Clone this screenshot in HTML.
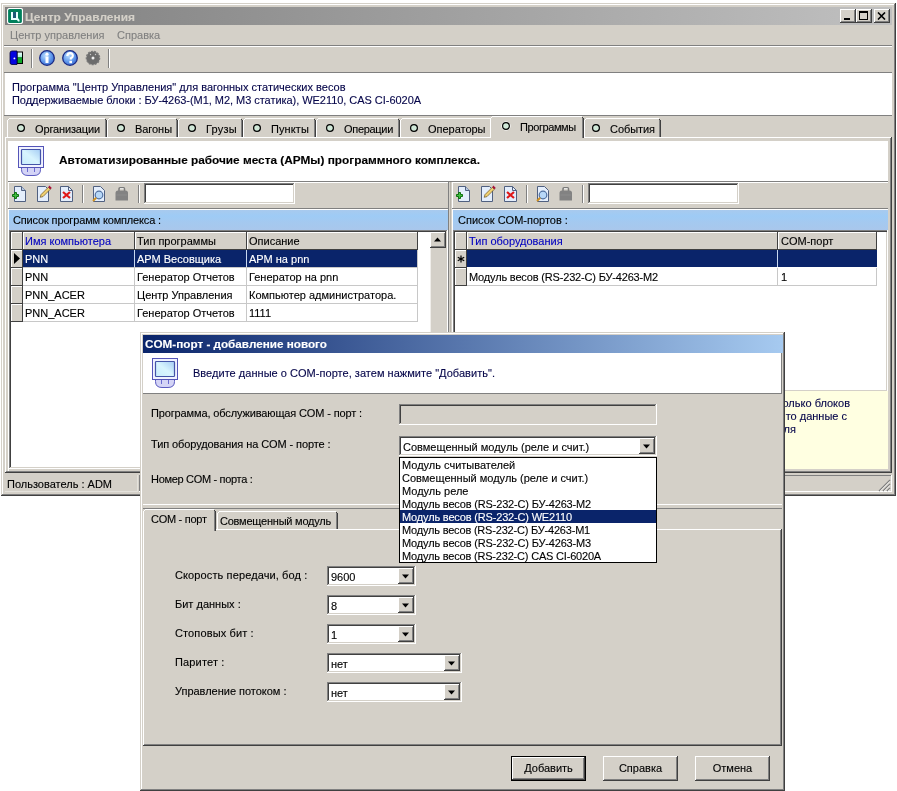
<!DOCTYPE html>
<html><head><meta charset="utf-8"><style>
html,body{margin:0;padding:0}
body{width:897px;height:791px;background:#fff;position:relative;overflow:hidden;font-family:"Liberation Sans",sans-serif;font-size:11px}
body>div{position:absolute}
.t{will-change:transform;-webkit-text-stroke:0.12px currentColor;white-space:pre;line-height:13px;font-family:"Liberation Sans",sans-serif;font-size:11px}
</style></head><body>
<div style="left:1px;top:3px;width:895px;height:493px;background:#d4d0c8;"></div>
<div style="left:1px;top:3px;width:894px;height:1px;background:#d4d0c8;"></div>
<div style="left:1px;top:3px;width:1px;height:492px;background:#d4d0c8;"></div>
<div style="left:1px;top:495px;width:895px;height:1px;background:#404040;"></div>
<div style="left:895px;top:3px;width:1px;height:493px;background:#404040;"></div>
<div style="left:2px;top:4px;width:892px;height:1px;background:#ffffff;"></div>
<div style="left:2px;top:4px;width:1px;height:490px;background:#ffffff;"></div>
<div style="left:2px;top:494px;width:893px;height:1px;background:#808080;"></div>
<div style="left:894px;top:4px;width:1px;height:491px;background:#808080;"></div>
<div style="left:5px;top:7px;width:887px;height:18px;background:linear-gradient(to right,#808080,#c0c0c0);"></div>
<svg style="position:absolute;left:7px;top:8px" width="16" height="16" viewBox="0 0 16 16">
<rect x="0.5" y="0.5" width="15" height="15" rx="2" fill="#00805c" stroke="#ffffff" stroke-width="1.2"/>
<rect x="5.5" y="4" width="4" height="6.5" fill="#1c5878"/>
<path d="M4 4 H6 V10 H9 V4 H11 V10 L12.5 12 V13.5 H11 L10 12 H4 Z" fill="#e8ffff"/>
</svg>
<div class="t" style="left:25px;top:11px;color:#d4d0c8;font-size:11px;font-weight:bold;transform:scaleX(1.0847);transform-origin:0 0;">Центр Управления</div>
<div style="left:840px;top:9px;width:16px;height:14px;background:#d4d0c8;"></div>
<div style="left:840px;top:9px;width:15px;height:1px;background:#ffffff;"></div>
<div style="left:840px;top:9px;width:1px;height:13px;background:#ffffff;"></div>
<div style="left:840px;top:22px;width:16px;height:1px;background:#404040;"></div>
<div style="left:855px;top:9px;width:1px;height:14px;background:#404040;"></div>
<div style="left:841px;top:10px;width:13px;height:1px;background:#d4d0c8;"></div>
<div style="left:841px;top:10px;width:1px;height:11px;background:#d4d0c8;"></div>
<div style="left:841px;top:21px;width:14px;height:1px;background:#808080;"></div>
<div style="left:854px;top:10px;width:1px;height:12px;background:#808080;"></div>
<div style="left:844px;top:18px;width:6px;height:2px;background:#000;"></div>
<div style="left:856px;top:9px;width:16px;height:14px;background:#d4d0c8;"></div>
<div style="left:856px;top:9px;width:15px;height:1px;background:#ffffff;"></div>
<div style="left:856px;top:9px;width:1px;height:13px;background:#ffffff;"></div>
<div style="left:856px;top:22px;width:16px;height:1px;background:#404040;"></div>
<div style="left:871px;top:9px;width:1px;height:14px;background:#404040;"></div>
<div style="left:857px;top:10px;width:13px;height:1px;background:#d4d0c8;"></div>
<div style="left:857px;top:10px;width:1px;height:11px;background:#d4d0c8;"></div>
<div style="left:857px;top:21px;width:14px;height:1px;background:#808080;"></div>
<div style="left:870px;top:10px;width:1px;height:12px;background:#808080;"></div>
<div style="left:859px;top:11px;width:9px;height:9px;background:transparent;border:1px solid #000;border-top-width:2px;box-sizing:border-box"></div>
<div style="left:874px;top:9px;width:16px;height:14px;background:#d4d0c8;"></div>
<div style="left:874px;top:9px;width:15px;height:1px;background:#ffffff;"></div>
<div style="left:874px;top:9px;width:1px;height:13px;background:#ffffff;"></div>
<div style="left:874px;top:22px;width:16px;height:1px;background:#404040;"></div>
<div style="left:889px;top:9px;width:1px;height:14px;background:#404040;"></div>
<div style="left:875px;top:10px;width:13px;height:1px;background:#d4d0c8;"></div>
<div style="left:875px;top:10px;width:1px;height:11px;background:#d4d0c8;"></div>
<div style="left:875px;top:21px;width:14px;height:1px;background:#808080;"></div>
<div style="left:888px;top:10px;width:1px;height:12px;background:#808080;"></div>
<svg style="position:absolute;left:877px;top:12px" width="10" height="8" viewBox="0 0 10 8"><path d="M1 0.5 L8 7.5 M8 0.5 L1 7.5" stroke="#000" stroke-width="1.6"/></svg>
<div class="t" style="left:10px;top:29px;color:#808080;font-size:11px;">Центр управления</div>
<div class="t" style="left:117px;top:29px;color:#808080;font-size:11px;">Справка</div>
<div style="left:4px;top:45px;width:888px;height:1px;background:#808080;"></div>
<div style="left:4px;top:46px;width:888px;height:1px;background:#ffffff;"></div>
<svg style="position:absolute;left:9px;top:50px" width="16" height="16" viewBox="0 0 16 16">
<defs><linearGradient id="ex" x1="0" y1="0" x2="0" y2="1"><stop offset="0" stop-color="#f0ffff"/><stop offset="1" stop-color="#a0f0d8"/></linearGradient></defs>
<rect x="7.5" y="1.5" width="6.5" height="12.5" fill="#000"/>
<rect x="8.5" y="2.5" width="4.5" height="5" fill="url(#ex)"/>
<rect x="8.5" y="7.5" width="4.5" height="5.5" fill="#10a828"/>
<path d="M1 3 Q1 1 3 1 H8 V14.5 H3 Q1 14.5 1 12.5 Z" fill="#0404e0" stroke="#00003a" stroke-width="0.8"/>
<circle cx="5.4" cy="8.4" r="0.9" fill="#fff"/>
</svg>
<div style="left:31px;top:49px;width:1px;height:19px;background:#808080;"></div>
<div style="left:32px;top:49px;width:1px;height:19px;background:#ffffff;"></div>
<svg style="position:absolute;left:39px;top:50px" width="17" height="17" viewBox="0 0 17 17">
<defs><radialGradient id="bl" cx="0.4" cy="0.35" r="0.7"><stop offset="0" stop-color="#b8dcff"/><stop offset="0.6" stop-color="#6098ec"/><stop offset="1" stop-color="#3a68d0"/></radialGradient></defs>
<circle cx="8" cy="8" r="7.3" fill="url(#bl)" stroke="#1a2a84" stroke-width="1.3"/>
<rect x="6.5" y="6.5" width="3" height="6.5" fill="#fff"/><circle cx="8" cy="4.2" r="1.6" fill="#fff"/>
</svg>
<svg style="position:absolute;left:62px;top:50px" width="17" height="17" viewBox="0 0 17 17">
<circle cx="8" cy="8" r="7.3" fill="url(#bl)" stroke="#1a2a84" stroke-width="1.3"/>
<path d="M5.3 6 Q5.5 3.2 8.2 3.2 Q11 3.4 10.8 5.8 Q10.6 7.4 8.8 8.2 V9.6" fill="none" stroke="#fff" stroke-width="2.2"/>
<rect x="7.4" y="10.8" width="2.6" height="2.4" fill="#fff"/>
</svg>
<svg style="position:absolute;left:85px;top:50px" width="16" height="16" viewBox="0 0 16 16">
<circle cx="8" cy="8" r="6.6" fill="#6c6c6c" stroke="#7a7a7a" stroke-width="1.4" stroke-dasharray="2 1.2"/><circle cx="5.5" cy="4.5" r="0.7" fill="#c8c8c8"/><circle cx="10.5" cy="4.5" r="0.7" fill="#c8c8c8"/>
<circle cx="8" cy="8" r="1.5" fill="#f0f0f0"/>
</svg>
<div style="left:108px;top:49px;width:1px;height:19px;background:#808080;"></div>
<div style="left:109px;top:49px;width:1px;height:19px;background:#ffffff;"></div>
<div style="left:4px;top:72px;width:888px;height:1px;background:#808080;"></div>
<div style="left:5px;top:73px;width:887px;height:42px;background:#ffffff;"></div>
<div style="left:4px;top:115px;width:888px;height:1px;background:#808080;"></div>
<div class="t" style="left:12px;top:81px;color:#06064a;font-size:11px;letter-spacing:0.008px;">Программа "Центр Управления" для вагонных статических весов</div>
<div class="t" style="left:12px;top:94px;color:#06064a;font-size:11px;letter-spacing:-0.043px;">Поддерживаемые блоки : БУ-4263-(М1, М2, М3 статика), WE2110, CAS CI-6020A</div>
<div style="left:5px;top:137px;width:886px;height:1px;background:#ffffff;"></div>
<div style="left:5px;top:137px;width:1px;height:335px;background:#ffffff;"></div>
<div style="left:5px;top:472px;width:887px;height:1px;background:#404040;"></div>
<div style="left:891px;top:137px;width:1px;height:336px;background:#404040;"></div>
<div style="left:6px;top:471px;width:885px;height:1px;background:#808080;"></div>
<div style="left:890px;top:138px;width:1px;height:334px;background:#808080;"></div>
<div style="left:7px;top:118px;width:100px;height:19px;background:#d4d0c8;"></div>
<div style="left:9px;top:118px;width:96px;height:1px;background:#ffffff;"></div>
<div style="left:7px;top:120px;width:1px;height:17px;background:#ffffff;"></div>
<div style="left:8px;top:119px;width:1px;height:1px;background:#ffffff;"></div>
<div style="left:106px;top:120px;width:1px;height:17px;background:#404040;"></div>
<div style="left:105px;top:119px;width:1px;height:18px;background:#808080;"></div>
<div style="left:105px;top:119px;width:1px;height:1px;background:#404040;"></div>
<svg style="position:absolute;left:16px;top:123px" width="10" height="10" viewBox="0 0 10 10"><circle cx="5" cy="5" r="3.4" fill="#d0e8d8" stroke="#000" stroke-width="1.2"/></svg>
<div class="t" style="left:35px;top:123px;color:#000;font-size:11px;letter-spacing:-0.141px;">Организации</div>
<div style="left:107px;top:118px;width:71px;height:19px;background:#d4d0c8;"></div>
<div style="left:109px;top:118px;width:67px;height:1px;background:#ffffff;"></div>
<div style="left:107px;top:120px;width:1px;height:17px;background:#ffffff;"></div>
<div style="left:108px;top:119px;width:1px;height:1px;background:#ffffff;"></div>
<div style="left:177px;top:120px;width:1px;height:17px;background:#404040;"></div>
<div style="left:176px;top:119px;width:1px;height:18px;background:#808080;"></div>
<div style="left:176px;top:119px;width:1px;height:1px;background:#404040;"></div>
<svg style="position:absolute;left:116px;top:123px" width="10" height="10" viewBox="0 0 10 10"><circle cx="5" cy="5" r="3.4" fill="#d0e8d8" stroke="#000" stroke-width="1.2"/></svg>
<div class="t" style="left:135px;top:123px;color:#000;font-size:11px;letter-spacing:-0.055px;">Вагоны</div>
<div style="left:178px;top:118px;width:65px;height:19px;background:#d4d0c8;"></div>
<div style="left:180px;top:118px;width:61px;height:1px;background:#ffffff;"></div>
<div style="left:178px;top:120px;width:1px;height:17px;background:#ffffff;"></div>
<div style="left:179px;top:119px;width:1px;height:1px;background:#ffffff;"></div>
<div style="left:242px;top:120px;width:1px;height:17px;background:#404040;"></div>
<div style="left:241px;top:119px;width:1px;height:18px;background:#808080;"></div>
<div style="left:241px;top:119px;width:1px;height:1px;background:#404040;"></div>
<svg style="position:absolute;left:187px;top:123px" width="10" height="10" viewBox="0 0 10 10"><circle cx="5" cy="5" r="3.4" fill="#d0e8d8" stroke="#000" stroke-width="1.2"/></svg>
<div class="t" style="left:206px;top:123px;color:#000;font-size:11px;letter-spacing:0.241px;">Грузы</div>
<div style="left:243px;top:118px;width:73px;height:19px;background:#d4d0c8;"></div>
<div style="left:245px;top:118px;width:69px;height:1px;background:#ffffff;"></div>
<div style="left:243px;top:120px;width:1px;height:17px;background:#ffffff;"></div>
<div style="left:244px;top:119px;width:1px;height:1px;background:#ffffff;"></div>
<div style="left:315px;top:120px;width:1px;height:17px;background:#404040;"></div>
<div style="left:314px;top:119px;width:1px;height:18px;background:#808080;"></div>
<div style="left:314px;top:119px;width:1px;height:1px;background:#404040;"></div>
<svg style="position:absolute;left:252px;top:123px" width="10" height="10" viewBox="0 0 10 10"><circle cx="5" cy="5" r="3.4" fill="#d0e8d8" stroke="#000" stroke-width="1.2"/></svg>
<div class="t" style="left:271px;top:123px;color:#000;font-size:11px;letter-spacing:0.104px;">Пункты</div>
<div style="left:316px;top:118px;width:84px;height:19px;background:#d4d0c8;"></div>
<div style="left:318px;top:118px;width:80px;height:1px;background:#ffffff;"></div>
<div style="left:316px;top:120px;width:1px;height:17px;background:#ffffff;"></div>
<div style="left:317px;top:119px;width:1px;height:1px;background:#ffffff;"></div>
<div style="left:399px;top:120px;width:1px;height:17px;background:#404040;"></div>
<div style="left:398px;top:119px;width:1px;height:18px;background:#808080;"></div>
<div style="left:398px;top:119px;width:1px;height:1px;background:#404040;"></div>
<svg style="position:absolute;left:325px;top:123px" width="10" height="10" viewBox="0 0 10 10"><circle cx="5" cy="5" r="3.4" fill="#d0e8d8" stroke="#000" stroke-width="1.2"/></svg>
<div class="t" style="left:344px;top:123px;color:#000;font-size:11px;letter-spacing:-0.309px;">Операции</div>
<div style="left:400px;top:118px;width:92px;height:19px;background:#d4d0c8;"></div>
<div style="left:402px;top:118px;width:88px;height:1px;background:#ffffff;"></div>
<div style="left:400px;top:120px;width:1px;height:17px;background:#ffffff;"></div>
<div style="left:401px;top:119px;width:1px;height:1px;background:#ffffff;"></div>
<div style="left:491px;top:120px;width:1px;height:17px;background:#404040;"></div>
<div style="left:490px;top:119px;width:1px;height:18px;background:#808080;"></div>
<div style="left:490px;top:119px;width:1px;height:1px;background:#404040;"></div>
<svg style="position:absolute;left:409px;top:123px" width="10" height="10" viewBox="0 0 10 10"><circle cx="5" cy="5" r="3.4" fill="#d0e8d8" stroke="#000" stroke-width="1.2"/></svg>
<div class="t" style="left:428px;top:123px;color:#000;font-size:11px;letter-spacing:-0.021px;">Операторы</div>
<div style="left:584px;top:118px;width:77px;height:19px;background:#d4d0c8;"></div>
<div style="left:586px;top:118px;width:73px;height:1px;background:#ffffff;"></div>
<div style="left:584px;top:120px;width:1px;height:17px;background:#ffffff;"></div>
<div style="left:585px;top:119px;width:1px;height:1px;background:#ffffff;"></div>
<div style="left:660px;top:120px;width:1px;height:17px;background:#404040;"></div>
<div style="left:659px;top:119px;width:1px;height:18px;background:#808080;"></div>
<div style="left:659px;top:119px;width:1px;height:1px;background:#404040;"></div>
<svg style="position:absolute;left:591px;top:123px" width="10" height="10" viewBox="0 0 10 10"><circle cx="5" cy="5" r="3.4" fill="#d0e8d8" stroke="#000" stroke-width="1.2"/></svg>
<div class="t" style="left:610px;top:123px;color:#000;font-size:11px;letter-spacing:-0.060px;">События</div>
<div style="left:490px;top:116px;width:94px;height:23px;background:#d4d0c8;"></div>
<div style="left:492px;top:116px;width:90px;height:1px;background:#ffffff;"></div>
<div style="left:490px;top:118px;width:1px;height:20px;background:#ffffff;"></div>
<div style="left:491px;top:117px;width:1px;height:1px;background:#ffffff;"></div>
<div style="left:583px;top:118px;width:1px;height:20px;background:#404040;"></div>
<div style="left:582px;top:117px;width:1px;height:21px;background:#808080;"></div>
<div style="left:582px;top:117px;width:1px;height:1px;background:#404040;"></div>
<svg style="position:absolute;left:501px;top:121px" width="10" height="10" viewBox="0 0 10 10"><circle cx="5" cy="5" r="4.6" fill="#fff"/><circle cx="5" cy="5" r="3.4" fill="#d0e8d8" stroke="#000" stroke-width="1.2"/></svg>
<div class="t" style="left:520px;top:121px;color:#000;font-size:11px;letter-spacing:-0.414px;">Программы</div>
<div style="left:8px;top:141px;width:880px;height:40px;background:#ffffff;"></div>
<div style="left:8px;top:181px;width:880px;height:1px;background:#808080;"></div>
<svg style="position:absolute;left:18px;top:146px" width="27" height="31" viewBox="0 0 27 31">
<defs><linearGradient id="scr18" x1="0" y1="1" x2="1" y2="0"><stop offset="0" stop-color="#c8ecfc"/><stop offset="0.5" stop-color="#d8f4fe"/><stop offset="1" stop-color="#a4ccf4"/></linearGradient></defs>
<path d="M3.5 21 V23.5 Q3.5 29.5 10 29.5 H16 Q22.5 29.5 22.5 23.5 V21 Z" fill="#d4d4f6" stroke="#5a5ac0" stroke-width="1"/>
<rect x="0.5" y="0.5" width="25" height="21" fill="#f0f2ff" stroke="#5454b8" stroke-width="1"/>
<rect x="3.5" y="3.5" width="19" height="15" rx="0.8" fill="url(#scr18)" stroke="#4454a8" stroke-width="1.2"/>
<line x1="9.5" y1="22" x2="9.5" y2="26" stroke="#6a6ad0" stroke-width="1"/>
<line x1="16.5" y1="22" x2="16.5" y2="26" stroke="#6a6ad0" stroke-width="1"/>
</svg>
<div class="t" style="left:59px;top:154px;color:#000;font-size:11px;font-weight:bold;transform:scaleX(1.0740);transform-origin:0 0;">Автоматизированные рабочие места (АРМы) программного комплекса.</div>
<div style="left:8px;top:182px;width:440px;height:1px;background:#ffffff;"></div>
<div style="left:8px;top:182px;width:1px;height:289px;background:#ffffff;"></div>
<div style="left:448px;top:182px;width:1px;height:289px;background:#808080;"></div>
<div style="left:452px;top:182px;width:436px;height:1px;background:#ffffff;"></div>
<div style="left:452px;top:182px;width:1px;height:289px;background:#ffffff;"></div>
<div style="left:450px;top:182px;width:1px;height:289px;background:#b8b4ac;"></div>
<svg style="position:absolute;left:12px;top:185px" width="16" height="18" viewBox="0 0 16 18">
<path d="M2.5 1.5 H9.5 L13.5 5.5 V16.5 H2.5 Z" fill="#e4eefc" stroke="#506080" stroke-width="1"/>
<path d="M9.5 1.5 V5.5 H13.5" fill="#b8c8e0" stroke="#506080" stroke-width="1"/>
<path d="M2.5 7.5 h2 v2 h2 v2 h-2 v2 h-2 v-2 h-2 v-2 h2 z" fill="#40c040" stroke="#107010" stroke-width="1"/>
</svg>
<svg style="position:absolute;left:37px;top:185px" width="16" height="18" viewBox="0 0 16 18">
<path d="M0.5 1.5 H8.5 L11.5 4.5 V16.5 H0.5 Z" fill="#e4eefc" stroke="#506080" stroke-width="1"/>
<path d="M3.2 12.3 L4 9.6 L11.3 2.3 L13.3 4.3 L6 11.6 Z" fill="#f0d070" stroke="#6a5020" stroke-width="0.7"/>
<path d="M11.3 2.3 L12.3 0.6 L14.8 3.1 L13.3 4.3 Z" fill="#a81038"/>
</svg>
<svg style="position:absolute;left:60px;top:185px" width="14" height="18" viewBox="0 0 14 18">
<path d="M0.5 1.5 H8.5 L12.5 5.5 V16.5 H0.5 Z" fill="#e4eefc" stroke="#506080" stroke-width="1"/>
<path d="M8.5 1.5 V5.5 H12.5" fill="none" stroke="#506080" stroke-width="1"/>
<path d="M3 7 L10 13 M10 7 L3 13" stroke="#e01818" stroke-width="2.2"/>
</svg>
<div style="left:82px;top:185px;width:1px;height:18px;background:#808080;"></div>
<div style="left:83px;top:185px;width:1px;height:18px;background:#ffffff;"></div>
<svg style="position:absolute;left:91px;top:185px" width="16" height="18" viewBox="0 0 16 18">
<path d="M2.5 1.5 H9.5 L13.5 5.5 V16.5 H2.5 Z" fill="#e4eefc" stroke="#506080" stroke-width="1"/>
<circle cx="8" cy="10" r="3.8" fill="#b8d8f8" stroke="#5070a0" stroke-width="1.2"/>
<path d="M5.2 12.8 L2 16" stroke="#d09020" stroke-width="2"/>
</svg>
<svg style="position:absolute;left:114px;top:186px" width="16" height="16" viewBox="0 0 16 16">
<path d="M5 5 V2.8 Q5 1.8 6 1.8 H9.5 Q10.5 1.8 10.5 2.8 V5" fill="none" stroke="#7a7a7a" stroke-width="1.5"/>
<path d="M6 2.6 H9.6" stroke="#f4f4f4" stroke-width="0.9"/>
<path d="M1.5 7 Q1.5 4.5 4 4.5 H11.5 Q14 4.5 14 7 V14.5 H1.5 Z" fill="#828282"/>
<path d="M2.5 9 H13" stroke="#909090" stroke-width="0.8"/>
</svg>
<div style="left:138px;top:185px;width:1px;height:18px;background:#808080;"></div>
<div style="left:139px;top:185px;width:1px;height:18px;background:#ffffff;"></div>
<div style="left:144px;top:183px;width:151px;height:21px;background:#ffffff;"></div>
<div style="left:144px;top:183px;width:150px;height:1px;background:#808080;"></div>
<div style="left:144px;top:183px;width:1px;height:20px;background:#808080;"></div>
<div style="left:144px;top:203px;width:151px;height:1px;background:#ffffff;"></div>
<div style="left:294px;top:183px;width:1px;height:21px;background:#ffffff;"></div>
<div style="left:145px;top:184px;width:148px;height:1px;background:#404040;"></div>
<div style="left:145px;top:184px;width:1px;height:18px;background:#404040;"></div>
<div style="left:145px;top:202px;width:149px;height:1px;background:#d4d0c8;"></div>
<div style="left:293px;top:184px;width:1px;height:19px;background:#d4d0c8;"></div>
<svg style="position:absolute;left:456px;top:185px" width="16" height="18" viewBox="0 0 16 18">
<path d="M2.5 1.5 H9.5 L13.5 5.5 V16.5 H2.5 Z" fill="#e4eefc" stroke="#506080" stroke-width="1"/>
<path d="M9.5 1.5 V5.5 H13.5" fill="#b8c8e0" stroke="#506080" stroke-width="1"/>
<path d="M2.5 7.5 h2 v2 h2 v2 h-2 v2 h-2 v-2 h-2 v-2 h2 z" fill="#40c040" stroke="#107010" stroke-width="1"/>
</svg>
<svg style="position:absolute;left:481px;top:185px" width="16" height="18" viewBox="0 0 16 18">
<path d="M0.5 1.5 H8.5 L11.5 4.5 V16.5 H0.5 Z" fill="#e4eefc" stroke="#506080" stroke-width="1"/>
<path d="M3.2 12.3 L4 9.6 L11.3 2.3 L13.3 4.3 L6 11.6 Z" fill="#f0d070" stroke="#6a5020" stroke-width="0.7"/>
<path d="M11.3 2.3 L12.3 0.6 L14.8 3.1 L13.3 4.3 Z" fill="#a81038"/>
</svg>
<svg style="position:absolute;left:504px;top:185px" width="14" height="18" viewBox="0 0 14 18">
<path d="M0.5 1.5 H8.5 L12.5 5.5 V16.5 H0.5 Z" fill="#e4eefc" stroke="#506080" stroke-width="1"/>
<path d="M8.5 1.5 V5.5 H12.5" fill="none" stroke="#506080" stroke-width="1"/>
<path d="M3 7 L10 13 M10 7 L3 13" stroke="#e01818" stroke-width="2.2"/>
</svg>
<div style="left:526px;top:185px;width:1px;height:18px;background:#808080;"></div>
<div style="left:527px;top:185px;width:1px;height:18px;background:#ffffff;"></div>
<svg style="position:absolute;left:535px;top:185px" width="16" height="18" viewBox="0 0 16 18">
<path d="M2.5 1.5 H9.5 L13.5 5.5 V16.5 H2.5 Z" fill="#e4eefc" stroke="#506080" stroke-width="1"/>
<circle cx="8" cy="10" r="3.8" fill="#b8d8f8" stroke="#5070a0" stroke-width="1.2"/>
<path d="M5.2 12.8 L2 16" stroke="#d09020" stroke-width="2"/>
</svg>
<svg style="position:absolute;left:558px;top:186px" width="16" height="16" viewBox="0 0 16 16">
<path d="M5 5 V2.8 Q5 1.8 6 1.8 H9.5 Q10.5 1.8 10.5 2.8 V5" fill="none" stroke="#7a7a7a" stroke-width="1.5"/>
<path d="M6 2.6 H9.6" stroke="#f4f4f4" stroke-width="0.9"/>
<path d="M1.5 7 Q1.5 4.5 4 4.5 H11.5 Q14 4.5 14 7 V14.5 H1.5 Z" fill="#828282"/>
<path d="M2.5 9 H13" stroke="#909090" stroke-width="0.8"/>
</svg>
<div style="left:582px;top:185px;width:1px;height:18px;background:#808080;"></div>
<div style="left:583px;top:185px;width:1px;height:18px;background:#ffffff;"></div>
<div style="left:588px;top:183px;width:151px;height:21px;background:#ffffff;"></div>
<div style="left:588px;top:183px;width:150px;height:1px;background:#808080;"></div>
<div style="left:588px;top:183px;width:1px;height:20px;background:#808080;"></div>
<div style="left:588px;top:203px;width:151px;height:1px;background:#ffffff;"></div>
<div style="left:738px;top:183px;width:1px;height:21px;background:#ffffff;"></div>
<div style="left:589px;top:184px;width:148px;height:1px;background:#404040;"></div>
<div style="left:589px;top:184px;width:1px;height:18px;background:#404040;"></div>
<div style="left:589px;top:202px;width:149px;height:1px;background:#d4d0c8;"></div>
<div style="left:737px;top:184px;width:1px;height:19px;background:#d4d0c8;"></div>
<div style="left:8px;top:208px;width:440px;height:1px;background:#808080;"></div>
<div style="left:452px;top:208px;width:436px;height:1px;background:#808080;"></div>
<div style="left:9px;top:209px;width:439px;height:1px;background:#ffffff;"></div>
<div style="left:453px;top:209px;width:435px;height:1px;background:#ffffff;"></div>
<div style="left:9px;top:210px;width:439px;height:20px;background:linear-gradient(to bottom,#a8caee 0%,#9ecbf5 30%,#a4c9f0 60%,#a9c7ec 100%);"></div>
<div style="left:453px;top:210px;width:435px;height:20px;background:linear-gradient(to bottom,#a8caee 0%,#9ecbf5 30%,#a4c9f0 60%,#a9c7ec 100%);"></div>
<div class="t" style="left:13px;top:214px;color:#000;font-size:11px;letter-spacing:-0.150px;">Список программ комплекса :</div>
<div class="t" style="left:458px;top:214px;color:#000;font-size:11px;">Список COM-портов :</div>
<div style="left:9px;top:230px;width:439px;height:239px;background:#ffffff;"></div>
<div style="left:9px;top:230px;width:438px;height:1px;background:#808080;"></div>
<div style="left:9px;top:230px;width:1px;height:238px;background:#808080;"></div>
<div style="left:10px;top:231px;width:437px;height:1px;background:#404040;"></div>
<div style="left:10px;top:231px;width:1px;height:237px;background:#404040;"></div>
<div style="left:9px;top:468px;width:439px;height:1px;background:#ffffff;"></div>
<div style="left:447px;top:230px;width:1px;height:239px;background:#ffffff;"></div>
<div style="left:10px;top:467px;width:437px;height:1px;background:#d4d0c8;"></div>
<div style="left:446px;top:231px;width:1px;height:237px;background:#d4d0c8;"></div>
<div style="left:11px;top:232px;width:12px;height:18px;background:#d4d0c8;"></div>
<div style="left:11px;top:249px;width:12px;height:1px;background:#404040;"></div>
<div style="left:22px;top:232px;width:1px;height:18px;background:#404040;"></div>
<div style="left:11px;top:232px;width:11px;height:1px;background:#ffffff;"></div>
<div style="left:11px;top:232px;width:1px;height:17px;background:#ffffff;"></div>
<div style="left:23px;top:232px;width:112px;height:18px;background:#d4d0c8;"></div>
<div style="left:23px;top:249px;width:112px;height:1px;background:#404040;"></div>
<div style="left:134px;top:232px;width:1px;height:18px;background:#404040;"></div>
<div style="left:23px;top:232px;width:111px;height:1px;background:#ffffff;"></div>
<div style="left:23px;top:232px;width:1px;height:17px;background:#ffffff;"></div>
<div style="left:135px;top:232px;width:112px;height:18px;background:#d4d0c8;"></div>
<div style="left:135px;top:249px;width:112px;height:1px;background:#404040;"></div>
<div style="left:246px;top:232px;width:1px;height:18px;background:#404040;"></div>
<div style="left:135px;top:232px;width:111px;height:1px;background:#ffffff;"></div>
<div style="left:135px;top:232px;width:1px;height:17px;background:#ffffff;"></div>
<div style="left:247px;top:232px;width:171px;height:18px;background:#d4d0c8;"></div>
<div style="left:247px;top:249px;width:171px;height:1px;background:#404040;"></div>
<div style="left:417px;top:232px;width:1px;height:18px;background:#404040;"></div>
<div style="left:247px;top:232px;width:170px;height:1px;background:#ffffff;"></div>
<div style="left:247px;top:232px;width:1px;height:17px;background:#ffffff;"></div>
<div class="t" style="left:25px;top:235px;color:#0000c0;font-size:11px;">Имя компьютера</div>
<div class="t" style="left:137px;top:235px;color:#000;font-size:11px;">Тип программы</div>
<div class="t" style="left:249px;top:235px;color:#000;font-size:11px;">Описание</div>
<div style="left:11px;top:250px;width:12px;height:18px;background:#d4d0c8;"></div>
<div style="left:11px;top:267px;width:12px;height:1px;background:#404040;"></div>
<div style="left:22px;top:250px;width:1px;height:18px;background:#404040;"></div>
<div style="left:11px;top:250px;width:11px;height:1px;background:#ffffff;"></div>
<div style="left:11px;top:250px;width:1px;height:17px;background:#ffffff;"></div>
<div style="left:23px;top:250px;width:394px;height:17px;background:#0a246a;"></div>
<svg style="position:absolute;left:13px;top:253px" width="8" height="11" viewBox="0 0 8 11"><path d="M1 0 L7 5.5 L1 11 Z" fill="#000"/></svg>
<div style="left:23px;top:267px;width:395px;height:1px;background:#c8c8c8;"></div>
<div style="left:134px;top:250px;width:1px;height:18px;background:#c8c8c8;"></div>
<div style="left:246px;top:250px;width:1px;height:18px;background:#c8c8c8;"></div>
<div style="left:417px;top:250px;width:1px;height:18px;background:#c8c8c8;"></div>
<div style="left:134px;top:250px;width:1px;height:17px;background:#c8d8f0;"></div>
<div style="left:246px;top:250px;width:1px;height:17px;background:#c8d8f0;"></div>
<div class="t" style="left:25px;top:253px;color:#fff;font-size:11px;">PNN</div>
<div class="t" style="left:137px;top:253px;color:#fff;font-size:11px;">АРМ Весовщика</div>
<div class="t" style="left:249px;top:253px;color:#fff;font-size:11px;">АРМ на pnn</div>
<div style="left:11px;top:268px;width:12px;height:18px;background:#d4d0c8;"></div>
<div style="left:11px;top:285px;width:12px;height:1px;background:#404040;"></div>
<div style="left:22px;top:268px;width:1px;height:18px;background:#404040;"></div>
<div style="left:11px;top:268px;width:11px;height:1px;background:#ffffff;"></div>
<div style="left:11px;top:268px;width:1px;height:17px;background:#ffffff;"></div>
<div style="left:23px;top:285px;width:395px;height:1px;background:#c8c8c8;"></div>
<div style="left:134px;top:268px;width:1px;height:18px;background:#c8c8c8;"></div>
<div style="left:246px;top:268px;width:1px;height:18px;background:#c8c8c8;"></div>
<div style="left:417px;top:268px;width:1px;height:18px;background:#c8c8c8;"></div>
<div class="t" style="left:25px;top:271px;color:#000;font-size:11px;">PNN</div>
<div class="t" style="left:137px;top:271px;color:#000;font-size:11px;">Генератор Отчетов</div>
<div class="t" style="left:249px;top:271px;color:#000;font-size:11px;">Генератор на pnn</div>
<div style="left:11px;top:286px;width:12px;height:18px;background:#d4d0c8;"></div>
<div style="left:11px;top:303px;width:12px;height:1px;background:#404040;"></div>
<div style="left:22px;top:286px;width:1px;height:18px;background:#404040;"></div>
<div style="left:11px;top:286px;width:11px;height:1px;background:#ffffff;"></div>
<div style="left:11px;top:286px;width:1px;height:17px;background:#ffffff;"></div>
<div style="left:23px;top:303px;width:395px;height:1px;background:#c8c8c8;"></div>
<div style="left:134px;top:286px;width:1px;height:18px;background:#c8c8c8;"></div>
<div style="left:246px;top:286px;width:1px;height:18px;background:#c8c8c8;"></div>
<div style="left:417px;top:286px;width:1px;height:18px;background:#c8c8c8;"></div>
<div class="t" style="left:25px;top:289px;color:#000;font-size:11px;">PNN_ACER</div>
<div class="t" style="left:137px;top:289px;color:#000;font-size:11px;">Центр Управления</div>
<div class="t" style="left:249px;top:289px;color:#000;font-size:11px;">Компьютер администратора.</div>
<div style="left:11px;top:304px;width:12px;height:18px;background:#d4d0c8;"></div>
<div style="left:11px;top:321px;width:12px;height:1px;background:#404040;"></div>
<div style="left:22px;top:304px;width:1px;height:18px;background:#404040;"></div>
<div style="left:11px;top:304px;width:11px;height:1px;background:#ffffff;"></div>
<div style="left:11px;top:304px;width:1px;height:17px;background:#ffffff;"></div>
<div style="left:23px;top:321px;width:395px;height:1px;background:#c8c8c8;"></div>
<div style="left:134px;top:304px;width:1px;height:18px;background:#c8c8c8;"></div>
<div style="left:246px;top:304px;width:1px;height:18px;background:#c8c8c8;"></div>
<div style="left:417px;top:304px;width:1px;height:18px;background:#c8c8c8;"></div>
<div class="t" style="left:25px;top:307px;color:#000;font-size:11px;">PNN_ACER</div>
<div class="t" style="left:137px;top:307px;color:#000;font-size:11px;">Генератор Отчетов</div>
<div class="t" style="left:249px;top:307px;color:#000;font-size:11px;">1111</div>
<div style="left:430px;top:232px;width:16px;height:235px;background:#d4d0c8;"></div>
<div style="left:430px;top:248px;width:1px;height:219px;background:#f0eeea;"></div>
<div style="left:430px;top:232px;width:16px;height:16px;background:#d4d0c8;"></div>
<div style="left:430px;top:232px;width:15px;height:1px;background:#ffffff;"></div>
<div style="left:430px;top:232px;width:1px;height:15px;background:#ffffff;"></div>
<div style="left:430px;top:247px;width:16px;height:1px;background:#404040;"></div>
<div style="left:445px;top:232px;width:1px;height:16px;background:#404040;"></div>
<div style="left:431px;top:233px;width:13px;height:1px;background:#d4d0c8;"></div>
<div style="left:431px;top:233px;width:1px;height:13px;background:#d4d0c8;"></div>
<div style="left:431px;top:246px;width:14px;height:1px;background:#808080;"></div>
<div style="left:444px;top:233px;width:1px;height:14px;background:#808080;"></div>
<svg style="position:absolute;left:434px;top:237px" width="8" height="5" viewBox="0 0 8 5"><path d="M0 4.5 L3.5 0.5 L7 4.5 Z" fill="#000"/></svg>
<div style="left:453px;top:230px;width:435px;height:161px;background:#ffffff;"></div>
<div style="left:453px;top:230px;width:434px;height:1px;background:#808080;"></div>
<div style="left:453px;top:230px;width:1px;height:161px;background:#808080;"></div>
<div style="left:454px;top:231px;width:433px;height:1px;background:#404040;"></div>
<div style="left:454px;top:231px;width:1px;height:160px;background:#404040;"></div>
<div style="left:887px;top:230px;width:1px;height:161px;background:#ffffff;"></div>
<div style="left:886px;top:232px;width:1px;height:159px;background:#d4d0c8;"></div>
<div style="left:455px;top:390px;width:432px;height:1px;background:#d4d0c8;"></div>
<div style="left:455px;top:232px;width:12px;height:18px;background:#d4d0c8;"></div>
<div style="left:455px;top:249px;width:12px;height:1px;background:#404040;"></div>
<div style="left:466px;top:232px;width:1px;height:18px;background:#404040;"></div>
<div style="left:455px;top:232px;width:11px;height:1px;background:#ffffff;"></div>
<div style="left:455px;top:232px;width:1px;height:17px;background:#ffffff;"></div>
<div style="left:467px;top:232px;width:311px;height:18px;background:#d4d0c8;"></div>
<div style="left:467px;top:249px;width:311px;height:1px;background:#404040;"></div>
<div style="left:777px;top:232px;width:1px;height:18px;background:#404040;"></div>
<div style="left:467px;top:232px;width:310px;height:1px;background:#ffffff;"></div>
<div style="left:467px;top:232px;width:1px;height:17px;background:#ffffff;"></div>
<div style="left:778px;top:232px;width:99px;height:18px;background:#d4d0c8;"></div>
<div style="left:778px;top:249px;width:99px;height:1px;background:#404040;"></div>
<div style="left:876px;top:232px;width:1px;height:18px;background:#404040;"></div>
<div style="left:778px;top:232px;width:98px;height:1px;background:#ffffff;"></div>
<div style="left:778px;top:232px;width:1px;height:17px;background:#ffffff;"></div>
<div class="t" style="left:469px;top:235px;color:#0000c0;font-size:11px;">Тип оборудования</div>
<div class="t" style="left:781px;top:235px;color:#000;font-size:11px;">COM-порт</div>
<div style="left:455px;top:250px;width:12px;height:18px;background:#d4d0c8;"></div>
<div style="left:455px;top:267px;width:12px;height:1px;background:#404040;"></div>
<div style="left:466px;top:250px;width:1px;height:18px;background:#404040;"></div>
<div style="left:455px;top:250px;width:11px;height:1px;background:#ffffff;"></div>
<div style="left:455px;top:250px;width:1px;height:17px;background:#ffffff;"></div>
<div style="left:467px;top:250px;width:410px;height:17px;background:#0a246a;"></div>
<div style="left:777px;top:250px;width:1px;height:17px;background:#c8d8f0;"></div>
<svg style="position:absolute;left:457px;top:255px" width="8" height="8" viewBox="0 0 8 8"><path d="M4 0.5 V7.5 M0.8 2.2 L7.2 5.8 M7.2 2.2 L0.8 5.8" stroke="#000" stroke-width="1.2"/></svg>
<div style="left:455px;top:268px;width:12px;height:18px;background:#d4d0c8;"></div>
<div style="left:455px;top:285px;width:12px;height:1px;background:#404040;"></div>
<div style="left:466px;top:268px;width:1px;height:18px;background:#404040;"></div>
<div style="left:455px;top:268px;width:11px;height:1px;background:#ffffff;"></div>
<div style="left:455px;top:268px;width:1px;height:17px;background:#ffffff;"></div>
<div style="left:467px;top:285px;width:410px;height:1px;background:#c8c8c8;"></div>
<div style="left:777px;top:268px;width:1px;height:18px;background:#c8c8c8;"></div>
<div style="left:876px;top:268px;width:1px;height:18px;background:#c8c8c8;"></div>
<div class="t" style="left:469px;top:271px;color:#000;font-size:11px;letter-spacing:-0.172px;">Модуль весов (RS-232-C) БУ-4263-М2</div>
<div class="t" style="left:781px;top:271px;color:#000;font-size:11px;">1</div>
<div style="left:452px;top:391px;width:436px;height:78px;background:#ffffe1;"></div>
<div class="t" style="left:550px;top:397px;width:300px;text-align:right;color:#06064a">поддерживает только блоков</div>
<div class="t" style="left:547px;top:410px;width:300px;text-align:right;color:#06064a">Убедитесь, что данные с</div>
<div class="t" style="left:496px;top:423px;width:300px;text-align:right;color:#06064a">устройства для</div>
<div style="left:5px;top:491px;width:133px;height:1px;background:#e4e2dc;"></div>
<div style="left:137px;top:475px;width:1px;height:17px;background:#e4e2dc;"></div>
<div style="left:139px;top:475px;width:753px;height:1px;background:#808080;"></div>
<div style="left:139px;top:475px;width:1px;height:17px;background:#808080;"></div>
<div style="left:139px;top:491px;width:753px;height:1px;background:#ffffff;"></div>
<div style="left:891px;top:475px;width:1px;height:17px;background:#ffffff;"></div>
<div class="t" style="left:7px;top:478px;color:#000;font-size:11px;">Пользователь : ADM</div>
<svg style="position:absolute;left:878px;top:479px" width="13" height="13" viewBox="0 0 13 13"><path d="M12 1 L1 12 M12 5 L5 12 M12 9 L9 12" stroke="#808080" stroke-width="1.3"/><path d="M12 2.3 L2.3 12 M12 6.3 L6.3 12 M12 10.3 L10.3 12" stroke="#fff" stroke-width="0.8"/></svg>
<div style="left:140px;top:332px;width:645px;height:459px;background:#d4d0c8;"></div>
<div style="left:140px;top:332px;width:644px;height:1px;background:#d4d0c8;"></div>
<div style="left:140px;top:332px;width:1px;height:458px;background:#d4d0c8;"></div>
<div style="left:140px;top:790px;width:645px;height:1px;background:#404040;"></div>
<div style="left:784px;top:332px;width:1px;height:459px;background:#404040;"></div>
<div style="left:141px;top:333px;width:642px;height:1px;background:#ffffff;"></div>
<div style="left:141px;top:333px;width:1px;height:456px;background:#ffffff;"></div>
<div style="left:141px;top:789px;width:643px;height:1px;background:#808080;"></div>
<div style="left:783px;top:333px;width:1px;height:457px;background:#808080;"></div>
<div style="left:143px;top:335px;width:640px;height:18px;background:linear-gradient(to right,#0a246a,#a6caf0);"></div>
<div class="t" style="left:145px;top:338px;color:#fff;font-size:11px;font-weight:bold;transform:scaleX(1.0639);transform-origin:0 0;">COM-порт - добавление нового</div>
<div style="left:143px;top:353px;width:639px;height:40px;background:#ffffff;"></div>
<div style="left:143px;top:393px;width:639px;height:1px;background:#808080;"></div>
<div style="left:781px;top:353px;width:1px;height:41px;background:#808080;"></div>
<svg style="position:absolute;left:152px;top:358px" width="27" height="31" viewBox="0 0 27 31">
<defs><linearGradient id="scr152" x1="0" y1="1" x2="1" y2="0"><stop offset="0" stop-color="#c8ecfc"/><stop offset="0.5" stop-color="#d8f4fe"/><stop offset="1" stop-color="#a4ccf4"/></linearGradient></defs>
<path d="M3.5 21 V23.5 Q3.5 29.5 10 29.5 H16 Q22.5 29.5 22.5 23.5 V21 Z" fill="#d4d4f6" stroke="#5a5ac0" stroke-width="1"/>
<rect x="0.5" y="0.5" width="25" height="21" fill="#f0f2ff" stroke="#5454b8" stroke-width="1"/>
<rect x="3.5" y="3.5" width="19" height="15" rx="0.8" fill="url(#scr152)" stroke="#4454a8" stroke-width="1.2"/>
<line x1="9.5" y1="22" x2="9.5" y2="26" stroke="#6a6ad0" stroke-width="1"/>
<line x1="16.5" y1="22" x2="16.5" y2="26" stroke="#6a6ad0" stroke-width="1"/>
</svg>
<div class="t" style="left:193px;top:367px;color:#06064a;font-size:11px;letter-spacing:0.031px;">Введите данные о COM-порте, затем нажмите "Добавить".</div>
<div class="t" style="left:151px;top:407px;color:#000;font-size:11px;letter-spacing:-0.133px;">Программа, обслуживающая COM - порт :</div>
<div class="t" style="left:151px;top:438px;color:#000;font-size:11px;letter-spacing:-0.089px;">Тип оборудования на COM - порте :</div>
<div class="t" style="left:151px;top:473px;color:#000;font-size:11px;letter-spacing:-0.313px;">Номер COM - порта :</div>
<div style="left:399px;top:404px;width:258px;height:21px;background:#d4d0c8;"></div>
<div style="left:399px;top:404px;width:257px;height:1px;background:#808080;"></div>
<div style="left:399px;top:404px;width:1px;height:20px;background:#808080;"></div>
<div style="left:399px;top:424px;width:258px;height:1px;background:#ffffff;"></div>
<div style="left:656px;top:404px;width:1px;height:21px;background:#ffffff;"></div>
<div style="left:400px;top:405px;width:255px;height:1px;background:#404040;"></div>
<div style="left:400px;top:405px;width:1px;height:18px;background:#404040;"></div>
<div style="left:400px;top:423px;width:256px;height:1px;background:#d4d0c8;"></div>
<div style="left:655px;top:405px;width:1px;height:19px;background:#d4d0c8;"></div>
<div style="left:399px;top:436px;width:258px;height:20px;background:#ffffff;"></div>
<div style="left:399px;top:436px;width:257px;height:1px;background:#808080;"></div>
<div style="left:399px;top:436px;width:1px;height:19px;background:#808080;"></div>
<div style="left:399px;top:455px;width:258px;height:1px;background:#ffffff;"></div>
<div style="left:656px;top:436px;width:1px;height:20px;background:#ffffff;"></div>
<div style="left:400px;top:437px;width:255px;height:1px;background:#404040;"></div>
<div style="left:400px;top:437px;width:1px;height:17px;background:#404040;"></div>
<div style="left:400px;top:454px;width:256px;height:1px;background:#d4d0c8;"></div>
<div style="left:655px;top:437px;width:1px;height:18px;background:#d4d0c8;"></div>
<div style="left:639px;top:438px;width:16px;height:16px;background:#d4d0c8;"></div>
<div style="left:639px;top:438px;width:15px;height:1px;background:#ffffff;"></div>
<div style="left:639px;top:438px;width:1px;height:15px;background:#ffffff;"></div>
<div style="left:639px;top:453px;width:16px;height:1px;background:#404040;"></div>
<div style="left:654px;top:438px;width:1px;height:16px;background:#404040;"></div>
<div style="left:640px;top:439px;width:13px;height:1px;background:#d4d0c8;"></div>
<div style="left:640px;top:439px;width:1px;height:13px;background:#d4d0c8;"></div>
<div style="left:640px;top:452px;width:14px;height:1px;background:#808080;"></div>
<div style="left:653px;top:439px;width:1px;height:14px;background:#808080;"></div>
<svg style="position:absolute;left:643px;top:444px" width="8" height="5" viewBox="0 0 8 5"><path d="M0 0.5 L7 0.5 L3.5 4.5 Z" fill="#000"/></svg>
<div class="t" style="left:403px;top:441px;color:#000;font-size:11px;">Совмещенный модуль (реле и счит.)</div>
<div style="left:143px;top:504px;width:639px;height:1px;background:#ffffff;"></div>
<div style="left:143px;top:508px;width:639px;height:1px;background:#808080;"></div>
<div style="left:143px;top:529px;width:638px;height:1px;background:#ffffff;"></div>
<div style="left:143px;top:529px;width:1px;height:216px;background:#ffffff;"></div>
<div style="left:143px;top:745px;width:639px;height:1px;background:#404040;"></div>
<div style="left:781px;top:529px;width:1px;height:217px;background:#404040;"></div>
<div style="left:144px;top:744px;width:637px;height:1px;background:#808080;"></div>
<div style="left:780px;top:530px;width:1px;height:215px;background:#808080;"></div>
<div style="left:217px;top:511px;width:121px;height:18px;background:#d4d0c8;"></div>
<div style="left:219px;top:511px;width:117px;height:1px;background:#ffffff;"></div>
<div style="left:217px;top:513px;width:1px;height:16px;background:#ffffff;"></div>
<div style="left:218px;top:512px;width:1px;height:1px;background:#ffffff;"></div>
<div style="left:337px;top:513px;width:1px;height:16px;background:#404040;"></div>
<div style="left:336px;top:512px;width:1px;height:17px;background:#808080;"></div>
<div style="left:336px;top:512px;width:1px;height:1px;background:#404040;"></div>
<div class="t" style="left:219.5px;top:515px;color:#000;font-size:11px;letter-spacing:-0.224px;">Совмещенный модуль</div>
<div style="left:143px;top:509px;width:73px;height:22px;background:#d4d0c8;"></div>
<div style="left:145px;top:509px;width:69px;height:1px;background:#ffffff;"></div>
<div style="left:143px;top:511px;width:1px;height:20px;background:#ffffff;"></div>
<div style="left:144px;top:510px;width:1px;height:1px;background:#ffffff;"></div>
<div style="left:215px;top:511px;width:1px;height:20px;background:#404040;"></div>
<div style="left:214px;top:510px;width:1px;height:21px;background:#808080;"></div>
<div style="left:214px;top:510px;width:1px;height:1px;background:#404040;"></div>
<div class="t" style="left:150.5px;top:513px;color:#000;font-size:11px;letter-spacing:-0.274px;">COM - порт</div>
<div class="t" style="left:174.5px;top:569px;color:#000;font-size:11px;letter-spacing:0.116px;">Скорость передачи, бод :</div>
<div style="left:327px;top:566px;width:89px;height:20px;background:#ffffff;"></div>
<div style="left:327px;top:566px;width:88px;height:1px;background:#808080;"></div>
<div style="left:327px;top:566px;width:1px;height:19px;background:#808080;"></div>
<div style="left:327px;top:585px;width:89px;height:1px;background:#ffffff;"></div>
<div style="left:415px;top:566px;width:1px;height:20px;background:#ffffff;"></div>
<div style="left:328px;top:567px;width:86px;height:1px;background:#404040;"></div>
<div style="left:328px;top:567px;width:1px;height:17px;background:#404040;"></div>
<div style="left:328px;top:584px;width:87px;height:1px;background:#d4d0c8;"></div>
<div style="left:414px;top:567px;width:1px;height:18px;background:#d4d0c8;"></div>
<div style="left:398px;top:568px;width:16px;height:16px;background:#d4d0c8;"></div>
<div style="left:398px;top:568px;width:15px;height:1px;background:#ffffff;"></div>
<div style="left:398px;top:568px;width:1px;height:15px;background:#ffffff;"></div>
<div style="left:398px;top:583px;width:16px;height:1px;background:#404040;"></div>
<div style="left:413px;top:568px;width:1px;height:16px;background:#404040;"></div>
<div style="left:399px;top:569px;width:13px;height:1px;background:#d4d0c8;"></div>
<div style="left:399px;top:569px;width:1px;height:13px;background:#d4d0c8;"></div>
<div style="left:399px;top:582px;width:14px;height:1px;background:#808080;"></div>
<div style="left:412px;top:569px;width:1px;height:14px;background:#808080;"></div>
<svg style="position:absolute;left:402px;top:574px" width="8" height="5" viewBox="0 0 8 5"><path d="M0 0.5 L7 0.5 L3.5 4.5 Z" fill="#000"/></svg>
<div class="t" style="left:331px;top:571px;color:#000;font-size:11px;">9600</div>
<div class="t" style="left:174.5px;top:598px;color:#000;font-size:11px;letter-spacing:0.002px;">Бит данных :</div>
<div style="left:327px;top:595px;width:89px;height:20px;background:#ffffff;"></div>
<div style="left:327px;top:595px;width:88px;height:1px;background:#808080;"></div>
<div style="left:327px;top:595px;width:1px;height:19px;background:#808080;"></div>
<div style="left:327px;top:614px;width:89px;height:1px;background:#ffffff;"></div>
<div style="left:415px;top:595px;width:1px;height:20px;background:#ffffff;"></div>
<div style="left:328px;top:596px;width:86px;height:1px;background:#404040;"></div>
<div style="left:328px;top:596px;width:1px;height:17px;background:#404040;"></div>
<div style="left:328px;top:613px;width:87px;height:1px;background:#d4d0c8;"></div>
<div style="left:414px;top:596px;width:1px;height:18px;background:#d4d0c8;"></div>
<div style="left:398px;top:597px;width:16px;height:16px;background:#d4d0c8;"></div>
<div style="left:398px;top:597px;width:15px;height:1px;background:#ffffff;"></div>
<div style="left:398px;top:597px;width:1px;height:15px;background:#ffffff;"></div>
<div style="left:398px;top:612px;width:16px;height:1px;background:#404040;"></div>
<div style="left:413px;top:597px;width:1px;height:16px;background:#404040;"></div>
<div style="left:399px;top:598px;width:13px;height:1px;background:#d4d0c8;"></div>
<div style="left:399px;top:598px;width:1px;height:13px;background:#d4d0c8;"></div>
<div style="left:399px;top:611px;width:14px;height:1px;background:#808080;"></div>
<div style="left:412px;top:598px;width:1px;height:14px;background:#808080;"></div>
<svg style="position:absolute;left:402px;top:603px" width="8" height="5" viewBox="0 0 8 5"><path d="M0 0.5 L7 0.5 L3.5 4.5 Z" fill="#000"/></svg>
<div class="t" style="left:331px;top:600px;color:#000;font-size:11px;">8</div>
<div class="t" style="left:174.5px;top:627px;color:#000;font-size:11px;letter-spacing:0.132px;">Стоповых бит :</div>
<div style="left:327px;top:624px;width:89px;height:20px;background:#ffffff;"></div>
<div style="left:327px;top:624px;width:88px;height:1px;background:#808080;"></div>
<div style="left:327px;top:624px;width:1px;height:19px;background:#808080;"></div>
<div style="left:327px;top:643px;width:89px;height:1px;background:#ffffff;"></div>
<div style="left:415px;top:624px;width:1px;height:20px;background:#ffffff;"></div>
<div style="left:328px;top:625px;width:86px;height:1px;background:#404040;"></div>
<div style="left:328px;top:625px;width:1px;height:17px;background:#404040;"></div>
<div style="left:328px;top:642px;width:87px;height:1px;background:#d4d0c8;"></div>
<div style="left:414px;top:625px;width:1px;height:18px;background:#d4d0c8;"></div>
<div style="left:398px;top:626px;width:16px;height:16px;background:#d4d0c8;"></div>
<div style="left:398px;top:626px;width:15px;height:1px;background:#ffffff;"></div>
<div style="left:398px;top:626px;width:1px;height:15px;background:#ffffff;"></div>
<div style="left:398px;top:641px;width:16px;height:1px;background:#404040;"></div>
<div style="left:413px;top:626px;width:1px;height:16px;background:#404040;"></div>
<div style="left:399px;top:627px;width:13px;height:1px;background:#d4d0c8;"></div>
<div style="left:399px;top:627px;width:1px;height:13px;background:#d4d0c8;"></div>
<div style="left:399px;top:640px;width:14px;height:1px;background:#808080;"></div>
<div style="left:412px;top:627px;width:1px;height:14px;background:#808080;"></div>
<svg style="position:absolute;left:402px;top:632px" width="8" height="5" viewBox="0 0 8 5"><path d="M0 0.5 L7 0.5 L3.5 4.5 Z" fill="#000"/></svg>
<div class="t" style="left:331px;top:629px;color:#000;font-size:11px;">1</div>
<div class="t" style="left:174.5px;top:656px;color:#000;font-size:11px;letter-spacing:0.155px;">Паритет :</div>
<div style="left:327px;top:653px;width:135px;height:20px;background:#ffffff;"></div>
<div style="left:327px;top:653px;width:134px;height:1px;background:#808080;"></div>
<div style="left:327px;top:653px;width:1px;height:19px;background:#808080;"></div>
<div style="left:327px;top:672px;width:135px;height:1px;background:#ffffff;"></div>
<div style="left:461px;top:653px;width:1px;height:20px;background:#ffffff;"></div>
<div style="left:328px;top:654px;width:132px;height:1px;background:#404040;"></div>
<div style="left:328px;top:654px;width:1px;height:17px;background:#404040;"></div>
<div style="left:328px;top:671px;width:133px;height:1px;background:#d4d0c8;"></div>
<div style="left:460px;top:654px;width:1px;height:18px;background:#d4d0c8;"></div>
<div style="left:444px;top:655px;width:16px;height:16px;background:#d4d0c8;"></div>
<div style="left:444px;top:655px;width:15px;height:1px;background:#ffffff;"></div>
<div style="left:444px;top:655px;width:1px;height:15px;background:#ffffff;"></div>
<div style="left:444px;top:670px;width:16px;height:1px;background:#404040;"></div>
<div style="left:459px;top:655px;width:1px;height:16px;background:#404040;"></div>
<div style="left:445px;top:656px;width:13px;height:1px;background:#d4d0c8;"></div>
<div style="left:445px;top:656px;width:1px;height:13px;background:#d4d0c8;"></div>
<div style="left:445px;top:669px;width:14px;height:1px;background:#808080;"></div>
<div style="left:458px;top:656px;width:1px;height:14px;background:#808080;"></div>
<svg style="position:absolute;left:448px;top:661px" width="8" height="5" viewBox="0 0 8 5"><path d="M0 0.5 L7 0.5 L3.5 4.5 Z" fill="#000"/></svg>
<div class="t" style="left:331px;top:658px;color:#000;font-size:11px;">нет</div>
<div class="t" style="left:174.5px;top:685px;color:#000;font-size:11px;letter-spacing:-0.016px;">Управление потоком :</div>
<div style="left:327px;top:682px;width:135px;height:20px;background:#ffffff;"></div>
<div style="left:327px;top:682px;width:134px;height:1px;background:#808080;"></div>
<div style="left:327px;top:682px;width:1px;height:19px;background:#808080;"></div>
<div style="left:327px;top:701px;width:135px;height:1px;background:#ffffff;"></div>
<div style="left:461px;top:682px;width:1px;height:20px;background:#ffffff;"></div>
<div style="left:328px;top:683px;width:132px;height:1px;background:#404040;"></div>
<div style="left:328px;top:683px;width:1px;height:17px;background:#404040;"></div>
<div style="left:328px;top:700px;width:133px;height:1px;background:#d4d0c8;"></div>
<div style="left:460px;top:683px;width:1px;height:18px;background:#d4d0c8;"></div>
<div style="left:444px;top:684px;width:16px;height:16px;background:#d4d0c8;"></div>
<div style="left:444px;top:684px;width:15px;height:1px;background:#ffffff;"></div>
<div style="left:444px;top:684px;width:1px;height:15px;background:#ffffff;"></div>
<div style="left:444px;top:699px;width:16px;height:1px;background:#404040;"></div>
<div style="left:459px;top:684px;width:1px;height:16px;background:#404040;"></div>
<div style="left:445px;top:685px;width:13px;height:1px;background:#d4d0c8;"></div>
<div style="left:445px;top:685px;width:1px;height:13px;background:#d4d0c8;"></div>
<div style="left:445px;top:698px;width:14px;height:1px;background:#808080;"></div>
<div style="left:458px;top:685px;width:1px;height:14px;background:#808080;"></div>
<svg style="position:absolute;left:448px;top:690px" width="8" height="5" viewBox="0 0 8 5"><path d="M0 0.5 L7 0.5 L3.5 4.5 Z" fill="#000"/></svg>
<div class="t" style="left:331px;top:687px;color:#000;font-size:11px;">нет</div>
<div style="left:511px;top:756px;width:75px;height:25px;background:#000;"></div>
<div style="left:512px;top:757px;width:73px;height:23px;background:#d4d0c8;"></div>
<div style="left:512px;top:757px;width:72px;height:1px;background:#ffffff;"></div>
<div style="left:512px;top:757px;width:1px;height:22px;background:#ffffff;"></div>
<div style="left:512px;top:779px;width:73px;height:1px;background:#404040;"></div>
<div style="left:584px;top:757px;width:1px;height:23px;background:#404040;"></div>
<div style="left:513px;top:758px;width:70px;height:1px;background:#d4d0c8;"></div>
<div style="left:513px;top:758px;width:1px;height:20px;background:#d4d0c8;"></div>
<div style="left:513px;top:778px;width:71px;height:1px;background:#808080;"></div>
<div style="left:583px;top:758px;width:1px;height:21px;background:#808080;"></div>
<div class="t" style="left:511px;top:762px;width:75px;text-align:center">Добавить</div>
<div style="left:603px;top:756px;width:75px;height:25px;background:#d4d0c8;"></div>
<div style="left:603px;top:756px;width:74px;height:1px;background:#ffffff;"></div>
<div style="left:603px;top:756px;width:1px;height:24px;background:#ffffff;"></div>
<div style="left:603px;top:780px;width:75px;height:1px;background:#404040;"></div>
<div style="left:677px;top:756px;width:1px;height:25px;background:#404040;"></div>
<div style="left:604px;top:757px;width:72px;height:1px;background:#d4d0c8;"></div>
<div style="left:604px;top:757px;width:1px;height:22px;background:#d4d0c8;"></div>
<div style="left:604px;top:779px;width:73px;height:1px;background:#808080;"></div>
<div style="left:676px;top:757px;width:1px;height:23px;background:#808080;"></div>
<div class="t" style="left:603px;top:762px;width:75px;text-align:center">Справка</div>
<div style="left:695px;top:756px;width:75px;height:25px;background:#d4d0c8;"></div>
<div style="left:695px;top:756px;width:74px;height:1px;background:#ffffff;"></div>
<div style="left:695px;top:756px;width:1px;height:24px;background:#ffffff;"></div>
<div style="left:695px;top:780px;width:75px;height:1px;background:#404040;"></div>
<div style="left:769px;top:756px;width:1px;height:25px;background:#404040;"></div>
<div style="left:696px;top:757px;width:72px;height:1px;background:#d4d0c8;"></div>
<div style="left:696px;top:757px;width:1px;height:22px;background:#d4d0c8;"></div>
<div style="left:696px;top:779px;width:73px;height:1px;background:#808080;"></div>
<div style="left:768px;top:757px;width:1px;height:23px;background:#808080;"></div>
<div class="t" style="left:695px;top:762px;width:75px;text-align:center">Отмена</div>
<div style="left:399px;top:457px;width:258px;height:106px;background:#ffffff;box-sizing:border-box;border:1px solid #000"></div>
<div class="t" style="left:402px;top:459px;color:#000;font-size:11px;">Модуль считывателей</div>
<div class="t" style="left:402px;top:472px;color:#000;font-size:11px;">Совмещенный модуль (реле и счит.)</div>
<div class="t" style="left:402px;top:485px;color:#000;font-size:11px;">Модуль реле</div>
<div class="t" style="left:402px;top:498px;color:#000;font-size:11px;letter-spacing:-0.172px;">Модуль весов (RS-232-C) БУ-4263-М2</div>
<div style="left:400px;top:510px;width:256px;height:13px;background:#0a246a;"></div>
<div class="t" style="left:402px;top:511px;color:#fff;font-size:11px;letter-spacing:-0.173px;">Модуль весов (RS-232-C) WE2110</div>
<div class="t" style="left:402px;top:524px;color:#000;font-size:11px;letter-spacing:-0.201px;">Модуль весов (RS-232-C) БУ-4263-М1</div>
<div class="t" style="left:402px;top:537px;color:#000;font-size:11px;letter-spacing:-0.172px;">Модуль весов (RS-232-C) БУ-4263-М3</div>
<div class="t" style="left:402px;top:550px;color:#000;font-size:11px;letter-spacing:-0.194px;">Модуль весов (RS-232-C) CAS CI-6020A</div>
</body></html>
